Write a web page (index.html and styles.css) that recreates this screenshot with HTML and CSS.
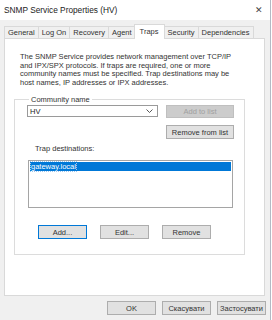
FILE: index.html
```html
<!DOCTYPE html>
<html lang="uk">
<head>
    <meta charset="UTF-8">
    <title>SNMP Service Properties (HV)</title>
    <link rel="stylesheet" href="styles.css">
</head>
<body>
    <div class="window">
        <div class="titlebar">
            <span class="title">SNMP Service Properties (HV)</span>
            <span class="close">&#x2715;</span>
        </div>

        <ul class="tabs">
            <li>General</li>
            <li>Log On</li>
            <li>Recovery</li>
            <li>Agent</li>
            <li class="active">Traps</li>
            <li>Security</li>
            <li>Dependencies</li>
        </ul>

        <div class="panel">
            <p class="intro">The SNMP Service provides network management over TCP/IP and IPX/SPX protocols. If traps are required, one or more community names must be specified. Trap destinations may be host names, IP addresses or IPX addresses.</p>

            <fieldset class="group">
                <legend>Community name</legend>
                <div class="row">
                    <div class="combo">
                        <span>HV</span>
                        <svg width="7" height="4" viewBox="0 0 7 4"><path d="M0.5 0.5 L3.5 3.5 L6.5 0.5" fill="none" stroke="#444" stroke-width="0.9"/></svg>
                    </div>
                    <button class="btn disabled">Add to list</button>
                </div>
                <div class="row right">
                    <button class="btn">Remove from list</button>
                </div>

                <div class="label">Trap destinations:</div>
                <div class="listbox">
                    <div class="item selected"><span>gateway.local</span></div>
                </div>

                <div class="actions">
                    <button class="btn default">Add...</button>
                    <button class="btn">Edit...</button>
                    <button class="btn">Remove</button>
                </div>
            </fieldset>
        </div>

        <div class="footer">
            <button class="btn">OK</button>
            <button class="btn">Скасувати</button>
            <button class="btn">Застосувати</button>
        </div>
    </div>
</body>
</html>
```

FILE: styles.css
```css
* {
    margin: 0;
    padding: 0;
    box-sizing: border-box;
}

body {
    font-family: 'Liberation Sans', Arial, sans-serif;
    font-size: 7.5px;
    color: #222;
    background: #fff;
    width: 272px;
    height: 320px;
    overflow: hidden;
}

.window {
    width: 271px;
    height: 320px;
    background: #f0f0f0;
    border-right: 1px solid #b4b9c4;
    display: flex;
    flex-direction: column;
}

.titlebar {
    height: 20px;
    background: #fff;
    display: flex;
    align-items: center;
    justify-content: space-between;
    padding: 0 7px 0 4px;
}

.title {
    font-size: 8.3px;
    color: #222;
}

.close {
    font-size: 9px;
    color: #444;
}

/* tabs */
.tabs {
    list-style: none;
    display: flex;
    align-items: flex-end;
    margin: 5px 0 0 4px;
    height: 13px;
    position: relative;
    z-index: 1;
}

.tabs li {
    height: 12px;
    line-height: 11px;
    padding: 0 3px;
    background: #f0f0f0;
    border: 1px solid #d9d9d9;
    border-bottom: none;
    margin-right: -1px;
    color: #333;
}

.tabs li.active {
    height: 15px;
    line-height: 13px;
    padding: 0 5px;
    margin: 0 -1px -1px -1px;
    background: #fff;
    border-color: #d9d9d9;
}

.panel {
    width: 261px;
    height: 258px;
    margin-left: 4px;
    background: #fff;
    border: 1px solid #d9d9d9;
    padding: 14px 0 0 15px;
}

.intro {
    width: 220px;
    line-height: 8.6px;
    color: #333;
}

/* community group */
.group {
    width: 231px;
    height: 160px;
    margin: 8px 0 0 -6px;
    border: 1px solid #dcdcdc;
    padding: 0 10px 0 12px;
}

.group legend {
    margin-left: 2px;
    padding: 0 2px;
    color: #333;
}

.row {
    display: flex;
    justify-content: space-between;
    align-items: flex-start;
    margin-top: 1px;
}

.row.right {
    justify-content: flex-end;
    margin-top: 7px;
}

.combo {
    width: 131px;
    height: 12px;
    border: 1px solid #9a9a9a;
    display: flex;
    align-items: center;
    justify-content: space-between;
    padding: 0 4px 0 2px;
}

.btn {
    font-family: inherit;
    font-size: 7.5px;
    height: 14px;
    width: 68px;
    background: #e1e1e1;
    border: 1px solid #adadad;
    color: #333;
}

.btn.disabled {
    background: #cccccc;
    border-color: #bfbfbf;
    color: #a0a0a0;
    height: 13px;
}

.btn.default {
    border-color: #0078d7;
}

.label {
    margin: 5px 0 0 8px;
    color: #333;
}

.listbox {
    width: 205px;
    height: 48px;
    margin: 7px 0 0 1px;
    border: 1px solid #a5a5a5;
    background: #fff;
    padding: 1px;
}

.item {
    height: 9px;
    line-height: 9px;
    padding-left: 1px;
}

.item.selected {
    background: #0078d7;
    color: #fff;
}

.item.selected span {
    outline: 1px dotted #9fc8ee;
}

.actions {
    display: flex;
    margin: 17px 0 0 11px;
    gap: 13px;
}

.actions .btn {
    width: 49px;
}

/* bottom buttons */
.footer {
    display: flex;
    justify-content: flex-end;
    gap: 6px;
    padding: 5px 4px 0 0;
}

.footer .btn {
    width: 49px;
    height: 14px;
}
```
